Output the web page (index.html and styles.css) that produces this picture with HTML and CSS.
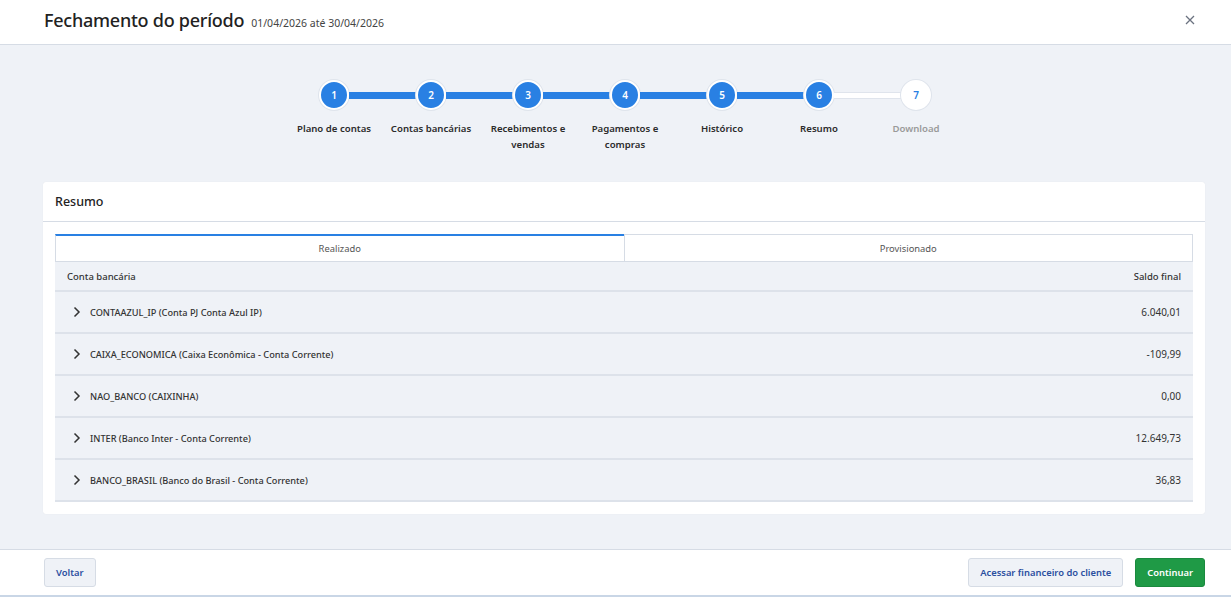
FILE: index.html
```html
<!DOCTYPE html>
<html lang="pt-BR">
<head>
<meta charset="utf-8">
<title>Fechamento do período</title>
<link rel="stylesheet" href="styles.css">
</head>
<body>
<div class="page">
  <header class="top">
    <div class="title-wrap">
      <h1 class="title">Fechamento do período</h1>
      <span class="period">01/04/2026 até 30/04/2026</span>
    </div>
    <button class="close" aria-label="Fechar">
      <svg width="10" height="10" viewBox="0 0 10 10"><path d="M1 1L9 9M9 1L1 9" stroke="#6b7280" stroke-width="1.3" fill="none"/></svg>
    </button>
  </header>

  <main class="content">
    <div class="stepper">
      <div class="step done"><div class="dot-row"><span class="bar"></span><span class="dot">1</span><span class="bar fill"></span></div><div class="label">Plano de contas</div></div>
      <div class="step done"><div class="dot-row"><span class="bar fill"></span><span class="dot">2</span><span class="bar fill"></span></div><div class="label">Contas bancárias</div></div>
      <div class="step done"><div class="dot-row"><span class="bar fill"></span><span class="dot">3</span><span class="bar fill"></span></div><div class="label">Recebimentos e vendas</div></div>
      <div class="step done"><div class="dot-row"><span class="bar fill"></span><span class="dot">4</span><span class="bar fill"></span></div><div class="label">Pagamentos e compras</div></div>
      <div class="step done"><div class="dot-row"><span class="bar fill"></span><span class="dot">5</span><span class="bar fill"></span></div><div class="label">Histórico</div></div>
      <div class="step done"><div class="dot-row"><span class="bar fill"></span><span class="dot">6</span><span class="bar empty"></span></div><div class="label">Resumo</div></div>
      <div class="step todo"><div class="dot-row"><span class="bar empty"></span><span class="dot">7</span><span class="bar"></span></div><div class="label">Download</div></div>
    </div>

    <section class="card">
      <div class="card-head">Resumo</div>
      <div class="card-body">
        <div class="tabs">
          <div class="tab active">Realizado</div>
          <div class="tab">Provisionado</div>
        </div>
        <div class="thead">
          <span>Conta bancária</span>
          <span>Saldo final</span>
        </div>
        <div class="row"><span class="name"><svg class="chev" width="8" height="12" viewBox="0 0 8 12"><path d="M1.5 1.5L6 6L1.5 10.5" stroke="#333" stroke-width="1.5" fill="none"/></svg>CONTAAZUL_IP (Conta PJ Conta Azul IP)</span><span class="val">6.040,01</span></div>
        <div class="row"><span class="name"><svg class="chev" width="8" height="12" viewBox="0 0 8 12"><path d="M1.5 1.5L6 6L1.5 10.5" stroke="#333" stroke-width="1.5" fill="none"/></svg>CAIXA_ECONOMICA (Caixa Econômica - Conta Corrente)</span><span class="val">-109,99</span></div>
        <div class="row"><span class="name"><svg class="chev" width="8" height="12" viewBox="0 0 8 12"><path d="M1.5 1.5L6 6L1.5 10.5" stroke="#333" stroke-width="1.5" fill="none"/></svg>NAO_BANCO (CAIXINHA)</span><span class="val">0,00</span></div>
        <div class="row"><span class="name"><svg class="chev" width="8" height="12" viewBox="0 0 8 12"><path d="M1.5 1.5L6 6L1.5 10.5" stroke="#333" stroke-width="1.5" fill="none"/></svg>INTER (Banco Inter - Conta Corrente)</span><span class="val">12.649,73</span></div>
        <div class="row"><span class="name"><svg class="chev" width="8" height="12" viewBox="0 0 8 12"><path d="M1.5 1.5L6 6L1.5 10.5" stroke="#333" stroke-width="1.5" fill="none"/></svg>BANCO_BRASIL (Banco do Brasil - Conta Corrente)</span><span class="val">36,83</span></div>
      </div>
    </section>
  </main>

  <footer class="foot">
    <button class="btn secondary">Voltar</button>
    <div class="foot-right">
      <button class="btn secondary">Acessar financeiro do cliente</button>
      <button class="btn primary">Continuar</button>
    </div>
  </footer>
</div>
</body>
</html>
```

FILE: styles.css
```css
* { box-sizing: border-box; }
html, body { margin: 0; padding: 0; }
body {
  font-family: "Noto Sans", "Open Sans", sans-serif;
  color: #333;
  background: #fff;
  width: 1231px;
  height: 597px;
  overflow: hidden;
}
.page {
  display: flex;
  flex-direction: column;
  height: 597px;
  border-bottom: 3px solid #c9d6e6;
}
.top {
  height: 45px;
  flex: none;
  background: #fff;
  border-bottom: 1px solid #d6dce5;
  display: flex;
  align-items: center;
  justify-content: space-between;
  padding: 0 36px 0 44px;
}
.title-wrap { display: flex; align-items: baseline; gap: 7px; margin-top: -4px; }
.title {
  margin: 0;
  font-size: 18px;
  font-weight: 500;
  color: #222;
  letter-spacing: -0.25px;
}
.period { font-size: 10.5px; color: #444; }
.close {
  border: 0; background: none; padding: 0; width: 10px; height: 10px;
  display: flex; margin-top: -4px;
}
.content {
  flex: 1;
  background: #eff2f7;
  padding: 35px 26px 35px 43px;
}
.stepper {
  display: flex;
  justify-content: center;
  padding-left: 2px;
}
.step { width: 97px; display: flex; flex-direction: column; align-items: center; }
.dot-row { display: flex; align-items: center; width: 100%; height: 30px; }
.bar { flex: 1; height: 7px; }
.bar.fill { background: #2980e3; }
.bar.empty { background: #fff; border-top: 1px solid #dfe4ec; border-bottom: 1px solid #dfe4ec; }
.dot {
  width: 30px; height: 30px; border-radius: 50%;
  display: flex; align-items: center; justify-content: center;
  font-size: 10px; font-weight: 600;
  border: 2px solid #fff;
  box-shadow: 0 0 0 1px #dfe4ec;
  flex: none;
}
.done .dot { background: #2980e3; color: #fff; }
.todo .dot { background: #fff; color: #2980e3; }
.label {
  margin-top: 11px;
  font-size: 9.6px;
  font-weight: 600;
  text-align: center;
  line-height: 16px;
  color: #2b2b2b;
  padding: 0 2px;
}
.todo .label { color: #9a9a9a; }
.card {
  margin-top: 29px;
  background: #fff;
  border-radius: 3px;
  box-shadow: 0 0 1px rgba(0,0,0,0.08);
}
.card-head {
  height: 40px;
  display: flex; align-items: center;
  padding: 0 12px;
  font-size: 12.5px;
  font-weight: 500;
  color: #222;
  border-bottom: 1px solid #d6dce5;
}
.card-body { padding: 12px 12px 12px 12px; }
.tabs { display: flex; }
.tab {
  flex: 1;
  height: 28px;
  display: flex; align-items: center; justify-content: center;
  font-size: 9.4px; color: #555;
  border: 1px solid #d6dce5;
}
.tab.active { border-top: 2px solid #2980e3; border-right: 0; }
.thead {
  height: 30px;
  display: flex; align-items: center; justify-content: space-between;
  padding: 0 12px;
  background: #eff2f7;
  font-size: 9.5px; font-weight: 500; color: #333;
  border-bottom: 2px solid #dde2ea;
}
.row {
  height: 42px;
  display: flex; align-items: center; justify-content: space-between;
  padding: 0 12px 0 18px;
  background: #eff2f7;
  border-bottom: 2px solid #dde2ea;
  font-size: 9.2px; color: #333;
}
.row .name { display: flex; align-items: center; gap: 9px; font-weight: 500; }
.chev { flex: none; }
.val { font-size: 10px; }
.foot {
  height: 46px;
  flex: none;
  background: #fff;
  border-top: 1px solid #d6dce5;
  display: flex; align-items: center; justify-content: space-between;
  padding: 0 26px 0 44px;
}
.foot-right { display: flex; gap: 12px; }
.btn {
  height: 29px;
  border-radius: 3px;
  font-family: inherit;
  font-size: 9.4px;
  font-weight: 600;
  padding: 0 11px;
}
.btn.secondary { background: #eff2f7; border: 1px solid #d6dce5; color: #2b4fa0; }
.btn.primary { background: #1f9a46; border: 1px solid #1a8a3e; color: #fff; }
```
